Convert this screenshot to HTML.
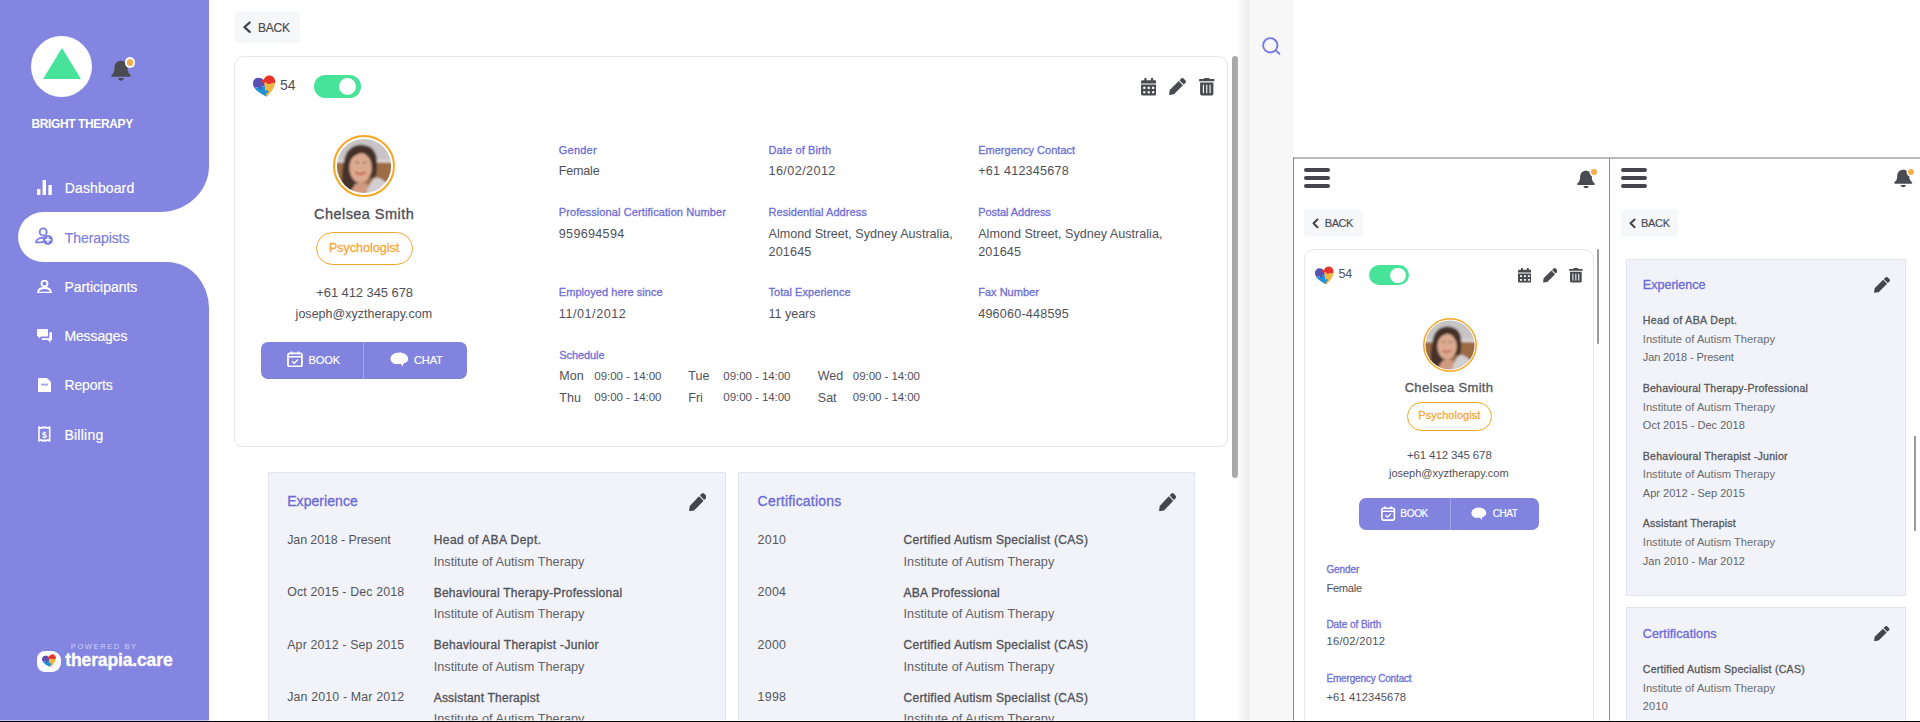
<!DOCTYPE html><html><head><meta charset="utf-8"><title>Therapist profile</title><style>html,body{margin:0;padding:0;background:#fff;}body{width:1920px;height:722px;position:relative;overflow:hidden;font-family:"Liberation Sans",sans-serif;}</style></head><body><div style="position:absolute;left:0px;top:0px;width:209.2px;height:212.3px;background:#8385e0;border-bottom-right-radius:49px 46px"></div>
<div style="position:absolute;left:0px;top:261.8px;width:209.2px;height:460px;background:#8385e0;border-top-right-radius:42px 46px"></div>
<div style="position:absolute;left:0px;top:200px;width:60px;height:80px;background:#8385e0"></div>
<div style="position:absolute;left:18.3px;top:212.3px;width:230px;height:49.4px;background:#fff;border-radius:25px 0 0 25px"></div>
<div style="position:absolute;left:31px;top:36px;width:61px;height:61px;background:#fff;border-radius:50%"></div>
<svg style="position:absolute;left:42.5px;top:48px;" width="38" height="31" viewBox="0 0 38 31" preserveAspectRatio="none"><polygon points="19,0 38,31 0,31" fill="#48e39a"/></svg>
<svg style="position:absolute;left:111px;top:60.3px;" width="20" height="20.700000000000003" viewBox="0 0 448 512" preserveAspectRatio="none"><path fill="#4a4b50" d="M224 512c35.3 0 64-28.7 64-64H160c0 35.3 28.7 64 64 64zM224 20C136 20 78 90 78 196c0 110-38 146-64 170-14 13-14 50 18 50h384c32 0 32-37 18-50-26-24-64-60-64-170C370 90 312 20 224 20z"/></svg>
<div style="position:absolute;left:126.6px;top:59.4px;width:6.8px;height:6.8px;border-radius:50%;background:#f5ad4a;box-shadow:0 0 0 2px #fff"></div>
<svg style="position:absolute;left:37px;top:180px;" width="15" height="15" viewBox="0 0 15 15" preserveAspectRatio="none"><rect x="0" y="9" width="3.4" height="6" fill="#fff"/><rect x="5.6" y="0" width="3.4" height="15" fill="#fff"/><rect x="11.4" y="5" width="3.4" height="10" fill="#fff"/></svg>
<svg style="position:absolute;left:32px;top:224px;" width="26" height="26" viewBox="0 0 26 26" preserveAspectRatio="none"><circle cx="11.2" cy="7.9" r="3.5" fill="none" stroke="#7d80df" stroke-width="1.9"/><path d="M4 18.2 C4.6 15 8.2 13.2 12.6 13.9 L13.2 17.6 C10 18.4 6.6 18.5 4 18.2 Z" fill="none" stroke="#7d80df" stroke-width="1.9" stroke-linejoin="round"/><circle cx="15.9" cy="15.9" r="5" fill="#7d80df"/><line x1="15.9" y1="13.1" x2="15.9" y2="18.7" stroke="#fff" stroke-width="1.5"/><line x1="13.1" y1="15.9" x2="18.7" y2="15.9" stroke="#fff" stroke-width="1.5"/></svg>
<svg style="position:absolute;left:37px;top:279.5px;" width="15" height="13.5" viewBox="0 0 15 13.5" preserveAspectRatio="none"><circle cx="7.5" cy="3.6" r="3" fill="none" stroke="#fff" stroke-width="1.8"/><path d="M1 12.6 C1.3 9 4 8 7.5 8 C11 8 13.7 9 14 12.6 Z" fill="none" stroke="#fff" stroke-width="1.8" stroke-linejoin="round"/></svg>
<svg style="position:absolute;left:36.7px;top:328.6px;" width="15.3" height="14" viewBox="0 0 15.3 14" preserveAspectRatio="none"><path d="M0 0.8 Q0 0 0.8 0 H10.2 Q11 0 11 0.8 V6.8 Q11 7.6 10.2 7.6 H4 L1.8 9.6 V7.6 H0.8 Q0 7.6 0 6.8 Z" fill="#fff"/><path d="M12.4 3.2 H14.5 Q15.3 3.2 15.3 4 V10.2 Q15.3 11 14.5 11 H13.6 V13.8 L11 11 H5.5 Q4.7 11 4.7 10.2 V9.2 H11.6 Q12.4 9.2 12.4 8.4 Z" fill="#fff"/></svg>
<svg style="position:absolute;left:38px;top:377.8px;" width="13.2" height="14.5" viewBox="0 0 13.2 14.5" preserveAspectRatio="none"><path d="M0 1 Q0 0 1 0 H9 L13.2 4.2 V13.5 Q13.2 14.5 12.2 14.5 H1 Q0 14.5 0 13.5 Z" fill="#fff"/><rect x="3" y="5.6" width="7.2" height="2" fill="#a9abee"/></svg>
<svg style="position:absolute;left:38px;top:426px;" width="12.7" height="16" viewBox="0 0 12.7 16" preserveAspectRatio="none"><path d="M1 1 L3 2.2 L5 1 L6.35 2 L7.7 1 L9.7 2.2 L11.7 1 V15 L9.7 13.8 L7.7 15 L6.35 14 L5 15 L3 13.8 L1 15 Z" fill="none" stroke="#fff" stroke-width="1.6" stroke-linejoin="round"/><text x="6.35" y="11.6" font-family="Liberation Sans" font-weight="700" font-size="8.5" fill="#fff" text-anchor="middle">$</text></svg>
<div style="position:absolute;left:37px;top:651px;width:24px;height:21px;border-radius:8px 9px 9px 8px;background:#fff"></div>
<svg style="position:absolute;left:41.5px;top:654px;" width="15" height="14" viewBox="0 0 24 23" preserveAspectRatio="none"><defs><clipPath id="hc15"><path d="M12 22 C4 16 0.8 11.8 0.8 7.2 C0.8 3.9 3.3 1.5 6.4 1.5 C8.7 1.5 10.8 2.8 12 4.9 C13.2 2.8 15.3 1.5 17.6 1.5 C20.7 1.5 23.2 3.9 23.2 7.2 C23.2 11.8 20 16 12 22 Z"/></clipPath></defs><g transform="rotate(-11 12 12)"><g clip-path="url(#hc15)"><rect x="-2" y="-2" width="14" height="13" fill="#5a50b2"/><rect x="12" y="-2" width="14" height="12" fill="#e8352b"/><rect x="-2" y="11" width="14" height="14" fill="#1c90d8"/><rect x="12" y="10" width="14" height="15" fill="#f3b540"/><circle cx="11.2" cy="5.6" r="1.5" fill="#e8352b"/><circle cx="13.4" cy="9.2" r="1.5" fill="#f3b540"/><circle cx="7.5" cy="11.8" r="1.5" fill="#5a50b2"/><circle cx="12.9" cy="17" r="1.5" fill="#1c90d8"/></g></g></svg>
<div style="position:absolute;left:234.7px;top:11.2px;width:65px;height:31.5px;background:#f6f7f9;border-radius:4px"></div>
<svg style="position:absolute;left:243.2px;top:21.2px;" width="8.200000000000017" height="12.400000000000002" viewBox="0 0 8.200000000000017 12.400000000000002" preserveAspectRatio="none"><polyline points="6.700000000000017,1.5 1.5,6.200000000000001 6.700000000000017,10.900000000000002" fill="none" stroke="#44454c" stroke-width="2.3" stroke-linecap="round" stroke-linejoin="round"/></svg>
<div style="position:absolute;left:234.3px;top:56px;width:994px;height:391px;border:1px solid #e3e6eb;border-radius:10px 10px 8px 8px;background:#fff;box-sizing:border-box"></div>
<svg style="position:absolute;left:253px;top:75px;" width="24" height="23" viewBox="0 0 24 23" preserveAspectRatio="none"><defs><clipPath id="hc19"><path d="M12 22 C4 16 0.8 11.8 0.8 7.2 C0.8 3.9 3.3 1.5 6.4 1.5 C8.7 1.5 10.8 2.8 12 4.9 C13.2 2.8 15.3 1.5 17.6 1.5 C20.7 1.5 23.2 3.9 23.2 7.2 C23.2 11.8 20 16 12 22 Z"/></clipPath></defs><g transform="rotate(-11 12 12)"><g clip-path="url(#hc19)"><rect x="-2" y="-2" width="14" height="13" fill="#5a50b2"/><rect x="12" y="-2" width="14" height="12" fill="#e8352b"/><rect x="-2" y="11" width="14" height="14" fill="#1c90d8"/><rect x="12" y="10" width="14" height="15" fill="#f3b540"/><circle cx="11.2" cy="5.6" r="1.5" fill="#e8352b"/><circle cx="13.4" cy="9.2" r="1.5" fill="#f3b540"/><circle cx="7.5" cy="11.8" r="1.5" fill="#5a50b2"/><circle cx="12.9" cy="17" r="1.5" fill="#1c90d8"/></g></g></svg>
<div style="position:absolute;left:314px;top:75px;width:46.6px;height:23.2px;border-radius:11.6px;background:#47e398"></div>
<div style="position:absolute;left:339.0px;top:78.1px;width:17px;height:17px;border-radius:50%;background:#fff"></div>
<svg style="position:absolute;left:1140.5px;top:78px;" width="15.5" height="17.5" viewBox="0 0 448 512" preserveAspectRatio="none"><path fill="#4a4b50" d="M0 464c0 26.5 21.5 48 48 48h352c26.5 0 48-21.5 48-48V192H0v272zm320-196c0-6.6 5.4-12 12-12h40c6.6 0 12 5.4 12 12v40c0 6.6-5.4 12-12 12h-40c-6.6 0-12-5.4-12-12v-40zm0 128c0-6.6 5.4-12 12-12h40c6.6 0 12 5.4 12 12v40c0 6.6-5.4 12-12 12h-40c-6.6 0-12-5.4-12-12v-40zM192 268c0-6.6 5.4-12 12-12h40c6.6 0 12 5.4 12 12v40c0 6.6-5.4 12-12 12h-40c-6.6 0-12-5.4-12-12v-40zm0 128c0-6.6 5.4-12 12-12h40c6.6 0 12 5.4 12 12v40c0 6.6-5.4 12-12 12h-40c-6.6 0-12-5.4-12-12v-40zM64 268c0-6.6 5.4-12 12-12h40c6.6 0 12 5.4 12 12v40c0 6.6-5.4 12-12 12H76c-6.6 0-12-5.4-12-12v-40zm0 128c0-6.6 5.4-12 12-12h40c6.6 0 12 5.4 12 12v40c0 6.6-5.4 12-12 12H76c-6.6 0-12-5.4-12-12v-40zM400 64h-48V16c0-8.8-7.2-16-16-16h-32c-8.8 0-16 7.2-16 16v48H160V16c0-8.8-7.2-16-16-16h-32c-8.8 0-16 7.2-16 16v48H48C21.5 64 0 85.5 0 112v48h448v-48c0-26.5-21.5-48-48-48z"/></svg>
<svg style="position:absolute;left:1169px;top:78px;" width="17" height="17" viewBox="0 0 512 512" preserveAspectRatio="none"><path fill="#4a4b50" d="M497.9 142.1l-46.1 46.1c-4.7 4.7-12.3 4.7-17 0l-111-111c-4.7-4.7-4.7-12.3 0-17l46.1-46.1c18.7-18.7 49.1-18.7 67.9 0l60.1 60.1c18.8 18.7 18.8 49.1 0 67.9zM284.2 99.8L21.6 362.4 0 512 149.6 490.4 412.3 227.8c4.7-4.7 4.7-12.3 0-17l-111-111c-4.8-4.7-12.4-4.7-17.1 0z"/></svg>
<svg style="position:absolute;left:1199px;top:78px;" width="15.5" height="17.5" viewBox="0 0 448 512" preserveAspectRatio="none"><path fill="#4a4b50" d="M32 464a48 48 0 0 0 48 48h288a48 48 0 0 0 48-48V128H32zm272-256a16 16 0 0 1 32 0v224a16 16 0 0 1-32 0zm-96 0a16 16 0 0 1 32 0v224a16 16 0 0 1-32 0zm-96 0a16 16 0 0 1 32 0v224a16 16 0 0 1-32 0zM432 32H312l-9.4-18.7A24 24 0 0 0 281.1 0H166.8a23.72 23.72 0 0 0-21.4 13.3L136 32H16A16 16 0 0 0 0 48v32a16 16 0 0 0 16 16h416a16 16 0 0 0 16-16V48a16 16 0 0 0-16-16z"/></svg>
<svg style="position:absolute;left:333.1px;top:134.8px;" width="62" height="62" viewBox="0 0 100 100" preserveAspectRatio="none"><defs><clipPath id="av25"><circle cx="50" cy="50" r="43.7"/></clipPath><filter id="bl25" x="-10%" y="-10%" width="120%" height="120%"><feGaussianBlur stdDeviation="1.6"/></filter></defs><circle cx="50" cy="50" r="48.4" fill="none" stroke="#f5a623" stroke-width="3.2"/><g clip-path="url(#av25)"><g filter="url(#bl25)"><rect x="-5" y="-5" width="110" height="110" fill="#c9c4c6"/><rect x="-5" y="40" width="110" height="5" fill="#e2dcda"/><rect x="-5" y="44.5" width="110" height="60" fill="#9c6c45"/><path d="M15 92 C13 70 15 45 21 31 C27 18 40 15 49 16 C60 17 67 23 70 34 C72 46 71 58 69 68 L58 70 L30 92 Z" fill="#45322a"/><ellipse cx="44.5" cy="53" rx="18" ry="24" fill="#dcaa90"/><path d="M26 40 C28 24 48 18 62 30 C55 26 42 26 26 40 Z" fill="#3f2c24"/><path d="M36 60 Q44 66 52 60" stroke="#c0504a" stroke-width="3" fill="none"/><path d="M36 44 l6 1 M48 45 l6 -1" stroke="#6a4a3c" stroke-width="1.6"/><path d="M26 110 C28 86 34 78 44 76 C50 76 54 78 58 82 L58 110 Z" fill="#cf9a80"/><path d="M52 110 C54 88 60 72 70 68 C80 70 92 80 100 96 L100 110 Z" fill="#d3cfd0"/></g></g></svg>
<div style="position:absolute;left:316.2px;top:232px;width:97px;height:32.6px;border:1px solid #f5a623;border-radius:17px;box-sizing:border-box"></div>
<div style="position:absolute;left:261px;top:342px;width:205.89999999999998px;height:36.60000000000002px;border-radius:7px;background:#8183df"></div>
<div style="position:absolute;left:363.3px;top:342px;width:1px;height:36.60000000000002px;background:#a4a6ea"></div>
<svg style="position:absolute;left:286.9px;top:351px;" width="15.900000000000034" height="16.399999999999977" viewBox="0 0 16 17" preserveAspectRatio="none"><rect x="1" y="2.5" width="14" height="13.5" rx="1.5" fill="none" stroke="#fff" stroke-width="1.8"/><line x1="1" y1="6" x2="15" y2="6" stroke="#fff" stroke-width="1.6"/><line x1="4.5" y1="0.5" x2="4.5" y2="3.5" stroke="#fff" stroke-width="1.8"/><line x1="11.5" y1="0.5" x2="11.5" y2="3.5" stroke="#fff" stroke-width="1.8"/><polyline points="5,10.5 7.3,12.7 11,8.8" fill="none" stroke="#fff" stroke-width="1.4"/></svg>
<svg style="position:absolute;left:389.6px;top:352.3px;" width="18.69999999999999" height="15.099999999999966" viewBox="0 0 19 15" preserveAspectRatio="none"><path d="M9.5 0.5C4.5 0.5 0.5 3.3 0.5 6.7c0 2.2 1.6 4.1 4.1 5.2h6.5l2 2.8 0.3-3.1c3.2-1 5.1-2.8 5.1-4.9C18.5 3.3 14.5 0.5 9.5 0.5z" fill="#fff"/></svg>
<div style="position:absolute;left:1231.8px;top:56px;width:6px;height:422px;background:#a9a9a9;border-radius:3px"></div>
<div style="position:absolute;left:268px;top:472.3px;width:458px;height:287.7px;background:#f2f3f8;border:1px solid #e3e5ea;box-sizing:border-box"></div>
<svg style="position:absolute;left:688.7px;top:492.7px;" width="17.59999999999991" height="18.30000000000001" viewBox="0 0 512 512" preserveAspectRatio="none"><path fill="#45464b" d="M497.9 142.1l-46.1 46.1c-4.7 4.7-12.3 4.7-17 0l-111-111c-4.7-4.7-4.7-12.3 0-17l46.1-46.1c18.7-18.7 49.1-18.7 67.9 0l60.1 60.1c18.8 18.7 18.8 49.1 0 67.9zM284.2 99.8L21.6 362.4 0 512 149.6 490.4 412.3 227.8c4.7-4.7 4.7-12.3 0-17l-111-111c-4.8-4.7-12.4-4.7-17.1 0z"/></svg>
<div style="position:absolute;left:738.4px;top:472.3px;width:456.19999999999993px;height:287.7px;background:#f2f3f8;border:1px solid #e3e5ea;box-sizing:border-box"></div>
<svg style="position:absolute;left:1159.3px;top:492.7px;" width="17.200000000000045" height="18.30000000000001" viewBox="0 0 512 512" preserveAspectRatio="none"><path fill="#45464b" d="M497.9 142.1l-46.1 46.1c-4.7 4.7-12.3 4.7-17 0l-111-111c-4.7-4.7-4.7-12.3 0-17l46.1-46.1c18.7-18.7 49.1-18.7 67.9 0l60.1 60.1c18.8 18.7 18.8 49.1 0 67.9zM284.2 99.8L21.6 362.4 0 512 149.6 490.4 412.3 227.8c4.7-4.7 4.7-12.3 0-17l-111-111c-4.8-4.7-12.4-4.7-17.1 0z"/></svg>
<div style="position:absolute;left:1236px;top:0px;width:13.3px;height:722px;background:linear-gradient(to right,rgba(230,230,230,0),#ececec)"></div>
<div style="position:absolute;left:1249.3px;top:0px;width:44px;height:722px;background:#f7f7f7"></div>
<svg style="position:absolute;left:1261px;top:36px;" width="20" height="20" viewBox="0 0 20 20" preserveAspectRatio="none"><circle cx="9.3" cy="9.3" r="7.2" fill="none" stroke="#7679df" stroke-width="1.9"/><line x1="14.6" y1="14.4" x2="18.4" y2="17.8" stroke="#7679df" stroke-width="1.9" stroke-linecap="round"/></svg>
<div style="position:absolute;left:1293px;top:156.9px;width:317px;height:566px;background:#fff;border-left:1.3px solid #8c8c8c;border-top:2px solid #bababa;border-right:1.6px solid #929292;box-sizing:border-box"></div>
<div style="position:absolute;left:1304px;top:167.5px;width:26px;height:4px;background:#45464b;border-radius:2px"></div>
<div style="position:absolute;left:1304px;top:175.6px;width:26px;height:4px;background:#45464b;border-radius:2px"></div>
<div style="position:absolute;left:1304px;top:183.6px;width:26px;height:4px;background:#45464b;border-radius:2px"></div>
<svg style="position:absolute;left:1577px;top:169.6px;" width="18" height="18.400000000000006" viewBox="0 0 448 512" preserveAspectRatio="none"><path fill="#4a4b50" d="M224 512c35.3 0 64-28.7 64-64H160c0 35.3 28.7 64 64 64zM224 20C136 20 78 90 78 196c0 110-38 146-64 170-14 13-14 50 18 50h384c32 0 32-37 18-50-26-24-64-60-64-170C370 90 312 20 224 20z"/></svg>
<div style="position:absolute;left:1590.8px;top:169px;width:6px;height:6px;border-radius:50%;background:#f5ad4a;box-shadow:0 0 0 1.5px #fff"></div>
<div style="position:absolute;left:1304px;top:208.8px;width:58.6px;height:28.6px;background:#f6f7f9;border-radius:4px"></div>
<svg style="position:absolute;left:1312px;top:218px;" width="7" height="10.699999999999989" viewBox="0 0 7 10.699999999999989" preserveAspectRatio="none"><polyline points="5.5,1.5 1.5,5.349999999999994 5.5,9.199999999999989" fill="none" stroke="#44454c" stroke-width="2" stroke-linecap="round" stroke-linejoin="round"/></svg>
<div style="position:absolute;left:1304.4px;top:248.8px;width:290px;height:500px;border:1px solid #e4e7ec;border-radius:10px;background:#fff;box-sizing:border-box"></div>
<div style="position:absolute;left:1597px;top:248.5px;width:2px;height:95.5px;background:#9a9a9a;border-radius:1px"></div>
<svg style="position:absolute;left:1315.3px;top:265.5px;" width="20" height="19.5" viewBox="0 0 24 23" preserveAspectRatio="none"><defs><clipPath id="hc49"><path d="M12 22 C4 16 0.8 11.8 0.8 7.2 C0.8 3.9 3.3 1.5 6.4 1.5 C8.7 1.5 10.8 2.8 12 4.9 C13.2 2.8 15.3 1.5 17.6 1.5 C20.7 1.5 23.2 3.9 23.2 7.2 C23.2 11.8 20 16 12 22 Z"/></clipPath></defs><g transform="rotate(-11 12 12)"><g clip-path="url(#hc49)"><rect x="-2" y="-2" width="14" height="13" fill="#5a50b2"/><rect x="12" y="-2" width="14" height="12" fill="#e8352b"/><rect x="-2" y="11" width="14" height="14" fill="#1c90d8"/><rect x="12" y="10" width="14" height="15" fill="#f3b540"/><circle cx="11.2" cy="5.6" r="1.5" fill="#e8352b"/><circle cx="13.4" cy="9.2" r="1.5" fill="#f3b540"/><circle cx="7.5" cy="11.8" r="1.5" fill="#5a50b2"/><circle cx="12.9" cy="17" r="1.5" fill="#1c90d8"/></g></g></svg>
<div style="position:absolute;left:1369.3px;top:265.4px;width:40px;height:20px;border-radius:10.0px;background:#47e398"></div>
<div style="position:absolute;left:1390.05px;top:267.65px;width:15.5px;height:15.5px;border-radius:50%;background:#fff"></div>
<svg style="position:absolute;left:1517.6px;top:268px;" width="13.800000000000182" height="14.600000000000023" viewBox="0 0 448 512" preserveAspectRatio="none"><path fill="#4a4b50" d="M0 464c0 26.5 21.5 48 48 48h352c26.5 0 48-21.5 48-48V192H0v272zm320-196c0-6.6 5.4-12 12-12h40c6.6 0 12 5.4 12 12v40c0 6.6-5.4 12-12 12h-40c-6.6 0-12-5.4-12-12v-40zm0 128c0-6.6 5.4-12 12-12h40c6.6 0 12 5.4 12 12v40c0 6.6-5.4 12-12 12h-40c-6.6 0-12-5.4-12-12v-40zM192 268c0-6.6 5.4-12 12-12h40c6.6 0 12 5.4 12 12v40c0 6.6-5.4 12-12 12h-40c-6.6 0-12-5.4-12-12v-40zm0 128c0-6.6 5.4-12 12-12h40c6.6 0 12 5.4 12 12v40c0 6.6-5.4 12-12 12h-40c-6.6 0-12-5.4-12-12v-40zM64 268c0-6.6 5.4-12 12-12h40c6.6 0 12 5.4 12 12v40c0 6.6-5.4 12-12 12H76c-6.6 0-12-5.4-12-12v-40zm0 128c0-6.6 5.4-12 12-12h40c6.6 0 12 5.4 12 12v40c0 6.6-5.4 12-12 12H76c-6.6 0-12-5.4-12-12v-40zM400 64h-48V16c0-8.8-7.2-16-16-16h-32c-8.8 0-16 7.2-16 16v48H160V16c0-8.8-7.2-16-16-16h-32c-8.8 0-16 7.2-16 16v48H48C21.5 64 0 85.5 0 112v48h448v-48c0-26.5-21.5-48-48-48z"/></svg>
<svg style="position:absolute;left:1542.6px;top:268px;" width="14.700000000000045" height="14.600000000000023" viewBox="0 0 512 512" preserveAspectRatio="none"><path fill="#4a4b50" d="M497.9 142.1l-46.1 46.1c-4.7 4.7-12.3 4.7-17 0l-111-111c-4.7-4.7-4.7-12.3 0-17l46.1-46.1c18.7-18.7 49.1-18.7 67.9 0l60.1 60.1c18.8 18.7 18.8 49.1 0 67.9zM284.2 99.8L21.6 362.4 0 512 149.6 490.4 412.3 227.8c4.7-4.7 4.7-12.3 0-17l-111-111c-4.8-4.7-12.4-4.7-17.1 0z"/></svg>
<svg style="position:absolute;left:1569.3px;top:268px;" width="13.700000000000045" height="14.600000000000023" viewBox="0 0 448 512" preserveAspectRatio="none"><path fill="#4a4b50" d="M32 464a48 48 0 0 0 48 48h288a48 48 0 0 0 48-48V128H32zm272-256a16 16 0 0 1 32 0v224a16 16 0 0 1-32 0zm-96 0a16 16 0 0 1 32 0v224a16 16 0 0 1-32 0zm-96 0a16 16 0 0 1 32 0v224a16 16 0 0 1-32 0zM432 32H312l-9.4-18.7A24 24 0 0 0 281.1 0H166.8a23.72 23.72 0 0 0-21.4 13.3L136 32H16A16 16 0 0 0 0 48v32a16 16 0 0 0 16 16h416a16 16 0 0 0 16-16V48a16 16 0 0 0-16-16z"/></svg>
<svg style="position:absolute;left:1422.5px;top:318.0px;" width="54" height="54" viewBox="0 0 100 100" preserveAspectRatio="none"><defs><clipPath id="av55"><circle cx="50" cy="50" r="45.5"/></clipPath><filter id="bl55" x="-10%" y="-10%" width="120%" height="120%"><feGaussianBlur stdDeviation="1.6"/></filter></defs><circle cx="50" cy="50" r="48.6" fill="none" stroke="#f5a623" stroke-width="2.8"/><g clip-path="url(#av55)"><g filter="url(#bl55)"><rect x="-5" y="-5" width="110" height="110" fill="#c9c4c6"/><rect x="-5" y="40" width="110" height="5" fill="#e2dcda"/><rect x="-5" y="44.5" width="110" height="60" fill="#9c6c45"/><path d="M15 92 C13 70 15 45 21 31 C27 18 40 15 49 16 C60 17 67 23 70 34 C72 46 71 58 69 68 L58 70 L30 92 Z" fill="#45322a"/><ellipse cx="44.5" cy="53" rx="18" ry="24" fill="#dcaa90"/><path d="M26 40 C28 24 48 18 62 30 C55 26 42 26 26 40 Z" fill="#3f2c24"/><path d="M36 60 Q44 66 52 60" stroke="#c0504a" stroke-width="3" fill="none"/><path d="M36 44 l6 1 M48 45 l6 -1" stroke="#6a4a3c" stroke-width="1.6"/><path d="M26 110 C28 86 34 78 44 76 C50 76 54 78 58 82 L58 110 Z" fill="#cf9a80"/><path d="M52 110 C54 88 60 72 70 68 C80 70 92 80 100 96 L100 110 Z" fill="#d3cfd0"/></g></g></svg>
<div style="position:absolute;left:1407px;top:402.4px;width:84.7px;height:28.2px;border:1px solid #f5a623;border-radius:15px;box-sizing:border-box"></div>
<div style="position:absolute;left:1358.8px;top:498.4px;width:180.4000000000001px;height:31.600000000000023px;border-radius:7px;background:#8183df"></div>
<div style="position:absolute;left:1449.5px;top:498.4px;width:1px;height:31.600000000000023px;background:#a4a6ea"></div>
<svg style="position:absolute;left:1381.4px;top:506px;" width="14.299999999999955" height="15" viewBox="0 0 16 17" preserveAspectRatio="none"><rect x="1" y="2.5" width="14" height="13.5" rx="1.5" fill="none" stroke="#fff" stroke-width="1.8"/><line x1="1" y1="6" x2="15" y2="6" stroke="#fff" stroke-width="1.6"/><line x1="4.5" y1="0.5" x2="4.5" y2="3.5" stroke="#fff" stroke-width="1.8"/><line x1="11.5" y1="0.5" x2="11.5" y2="3.5" stroke="#fff" stroke-width="1.8"/><polyline points="5,10.5 7.3,12.7 11,8.8" fill="none" stroke="#fff" stroke-width="1.4"/></svg>
<svg style="position:absolute;left:1471px;top:507px;" width="15.700000000000045" height="13.5" viewBox="0 0 19 15" preserveAspectRatio="none"><path d="M9.5 0.5C4.5 0.5 0.5 3.3 0.5 6.7c0 2.2 1.6 4.1 4.1 5.2h6.5l2 2.8 0.3-3.1c3.2-1 5.1-2.8 5.1-4.9C18.5 3.3 14.5 0.5 9.5 0.5z" fill="#fff"/></svg>
<div style="position:absolute;left:1609.3px;top:156.9px;width:320px;height:566px;background:#fff;border-left:1.6px solid #929292;border-top:2px solid #bababa;box-sizing:border-box"></div>
<div style="position:absolute;left:1620.7px;top:167.5px;width:26px;height:4px;background:#45464b;border-radius:2px"></div>
<div style="position:absolute;left:1620.7px;top:175.6px;width:26px;height:4px;background:#45464b;border-radius:2px"></div>
<div style="position:absolute;left:1620.7px;top:183.6px;width:26px;height:4px;background:#45464b;border-radius:2px"></div>
<svg style="position:absolute;left:1894px;top:169.4px;" width="18.5" height="18.19999999999999" viewBox="0 0 448 512" preserveAspectRatio="none"><path fill="#4a4b50" d="M224 512c35.3 0 64-28.7 64-64H160c0 35.3 28.7 64 64 64zM224 20C136 20 78 90 78 196c0 110-38 146-64 170-14 13-14 50 18 50h384c32 0 32-37 18-50-26-24-64-60-64-170C370 90 312 20 224 20z"/></svg>
<div style="position:absolute;left:1907.6px;top:169px;width:6px;height:6px;border-radius:50%;background:#f5ad4a;box-shadow:0 0 0 1.5px #fff"></div>
<div style="position:absolute;left:1620.7px;top:209.2px;width:57.7px;height:28.2px;background:#f6f7f9;border-radius:4px"></div>
<svg style="position:absolute;left:1628.7px;top:218px;" width="7.099999999999909" height="10.699999999999989" viewBox="0 0 7.099999999999909 10.699999999999989" preserveAspectRatio="none"><polyline points="5.599999999999909,1.5 1.5,5.349999999999994 5.599999999999909,9.199999999999989" fill="none" stroke="#44454c" stroke-width="2" stroke-linecap="round" stroke-linejoin="round"/></svg>
<div style="position:absolute;left:1626.3px;top:259.4px;width:279.3px;height:337px;background:#f2f3f8;border:1px solid #e3e5ea;box-sizing:border-box"></div>
<svg style="position:absolute;left:1874px;top:277.4px;" width="16" height="15.800000000000011" viewBox="0 0 512 512" preserveAspectRatio="none"><path fill="#45464b" d="M497.9 142.1l-46.1 46.1c-4.7 4.7-12.3 4.7-17 0l-111-111c-4.7-4.7-4.7-12.3 0-17l46.1-46.1c18.7-18.7 49.1-18.7 67.9 0l60.1 60.1c18.8 18.7 18.8 49.1 0 67.9zM284.2 99.8L21.6 362.4 0 512 149.6 490.4 412.3 227.8c4.7-4.7 4.7-12.3 0-17l-111-111c-4.8-4.7-12.4-4.7-17.1 0z"/></svg>
<div style="position:absolute;left:1626px;top:607.3px;width:279.6px;height:200px;background:#f2f3f8;border:1px solid #e3e5ea;box-sizing:border-box"></div>
<svg style="position:absolute;left:1874px;top:625.8px;" width="15.5" height="15.200000000000045" viewBox="0 0 512 512" preserveAspectRatio="none"><path fill="#45464b" d="M497.9 142.1l-46.1 46.1c-4.7 4.7-12.3 4.7-17 0l-111-111c-4.7-4.7-4.7-12.3 0-17l46.1-46.1c18.7-18.7 49.1-18.7 67.9 0l60.1 60.1c18.8 18.7 18.8 49.1 0 67.9zM284.2 99.8L21.6 362.4 0 512 149.6 490.4 412.3 227.8c4.7-4.7 4.7-12.3 0-17l-111-111c-4.8-4.7-12.4-4.7-17.1 0z"/></svg>
<div style="position:absolute;left:1914px;top:436.4px;width:1.5px;height:94.6px;background:#9a9a9a"></div>
<div style="position:absolute;left:31.40px;top:117.84px;font-size:12px;font-weight:700;color:#fff;line-height:12px;white-space:nowrap;letter-spacing:-0.377px;">BRIGHT THERAPY</div>
<div style="position:absolute;left:64.80px;top:181.35px;font-size:14px;font-weight:400;color:#fff;line-height:14px;white-space:nowrap;-webkit-text-stroke:0.18px #fff;letter-spacing:0.111px;">Dashboard</div>
<div style="position:absolute;left:64.80px;top:230.75px;font-size:14px;font-weight:400;color:#7b7edd;line-height:14px;white-space:nowrap;-webkit-text-stroke:0.18px #7b7edd;letter-spacing:-0.086px;">Therapists</div>
<div style="position:absolute;left:64.40px;top:280.15px;font-size:14px;font-weight:400;color:#fff;line-height:14px;white-space:nowrap;-webkit-text-stroke:0.18px #fff;letter-spacing:-0.021px;">Participants</div>
<div style="position:absolute;left:64.40px;top:329.25px;font-size:14px;font-weight:400;color:#fff;line-height:14px;white-space:nowrap;-webkit-text-stroke:0.18px #fff;letter-spacing:-0.114px;">Messages</div>
<div style="position:absolute;left:64.40px;top:378.45px;font-size:14px;font-weight:400;color:#fff;line-height:14px;white-space:nowrap;-webkit-text-stroke:0.18px #fff;letter-spacing:-0.090px;">Reports</div>
<div style="position:absolute;left:64.40px;top:427.85px;font-size:14px;font-weight:400;color:#fff;line-height:14px;white-space:nowrap;-webkit-text-stroke:0.18px #fff;letter-spacing:0.263px;">Billing</div>
<div style="position:absolute;left:70.80px;top:642.77px;font-size:7.6px;font-weight:400;color:#cfd0f4;line-height:7.6px;white-space:nowrap;letter-spacing:1.542px;">POWERED BY</div>
<div style="position:absolute;left:65.30px;top:652.38px;font-size:17.5px;font-weight:700;color:#fff;line-height:17.5px;white-space:nowrap;letter-spacing:-0.135px;-webkit-text-stroke:0.35px #fff;">therapia.care</div>
<div style="position:absolute;left:257.90px;top:21.84px;font-size:12px;font-weight:400;color:#4a4b52;line-height:12px;white-space:nowrap;-webkit-text-stroke:0.18px #4a4b52;letter-spacing:-0.147px;">BACK</div>
<div style="position:absolute;left:280.00px;top:78.05px;font-size:14px;font-weight:400;color:#505058;line-height:14px;white-space:nowrap;letter-spacing:0.061px;">54</div>
<div style="position:absolute;left:314.00px;top:207.22px;font-size:14.5px;font-weight:400;color:#4d4e56;line-height:14.5px;white-space:nowrap;-webkit-text-stroke:0.32px #4d4e56;letter-spacing:0.454px;">Chelsea Smith</div>
<div style="position:absolute;left:328.95px;top:242.12px;font-size:12.5px;font-weight:400;color:#f4a93c;line-height:12.5px;white-space:nowrap;-webkit-text-stroke:0.32px #f4a93c;letter-spacing:0.009px;">Psychologist</div>
<div style="position:absolute;left:316.25px;top:285.79px;font-size:13px;font-weight:400;color:#505058;line-height:13px;white-space:nowrap;letter-spacing:-0.085px;">+61 412 345 678</div>
<div style="position:absolute;left:295.60px;top:308.22px;font-size:12.5px;font-weight:400;color:#505058;line-height:12.5px;white-space:nowrap;letter-spacing:0.022px;">joseph@xyztherapy.com</div>
<div style="position:absolute;left:308.40px;top:354.89px;font-size:11px;font-weight:400;color:#fff;line-height:11px;white-space:nowrap;-webkit-text-stroke:0.18px #fff;letter-spacing:0.001px;">BOOK</div>
<div style="position:absolute;left:414.00px;top:354.89px;font-size:11px;font-weight:400;color:#fff;line-height:11px;white-space:nowrap;-webkit-text-stroke:0.18px #fff;letter-spacing:-0.110px;">CHAT</div>
<div style="position:absolute;left:558.80px;top:144.59px;font-size:11px;font-weight:400;color:#6e6ed8;line-height:11px;white-space:nowrap;-webkit-text-stroke:0.3px #6e6ed8;letter-spacing:0.216px;">Gender</div>
<div style="position:absolute;left:558.80px;top:165.23px;font-size:12.6px;font-weight:400;color:#505058;line-height:12.6px;white-space:nowrap;letter-spacing:-0.217px;">Female</div>
<div style="position:absolute;left:768.50px;top:144.59px;font-size:11px;font-weight:400;color:#6e6ed8;line-height:11px;white-space:nowrap;-webkit-text-stroke:0.3px #6e6ed8;letter-spacing:0.128px;">Date of Birth</div>
<div style="position:absolute;left:768.50px;top:165.23px;font-size:12.6px;font-weight:400;color:#505058;line-height:12.6px;white-space:nowrap;letter-spacing:0.427px;">16/02/2012</div>
<div style="position:absolute;left:978.20px;top:144.59px;font-size:11px;font-weight:400;color:#6e6ed8;line-height:11px;white-space:nowrap;-webkit-text-stroke:0.3px #6e6ed8;letter-spacing:0.023px;">Emergency Contact</div>
<div style="position:absolute;left:978.20px;top:165.23px;font-size:12.6px;font-weight:400;color:#505058;line-height:12.6px;white-space:nowrap;letter-spacing:0.223px;">+61 412345678</div>
<div style="position:absolute;left:558.80px;top:206.89px;font-size:11px;font-weight:400;color:#6e6ed8;line-height:11px;white-space:nowrap;-webkit-text-stroke:0.3px #6e6ed8;letter-spacing:0.101px;">Professional Certification Number</div>
<div style="position:absolute;left:558.80px;top:227.73px;font-size:12.6px;font-weight:400;color:#505058;line-height:12.6px;white-space:nowrap;letter-spacing:0.295px;">959694594</div>
<div style="position:absolute;left:768.50px;top:206.89px;font-size:11px;font-weight:400;color:#6e6ed8;line-height:11px;white-space:nowrap;-webkit-text-stroke:0.3px #6e6ed8;letter-spacing:0.056px;">Residential Address</div>
<div style="position:absolute;left:768.50px;top:227.73px;font-size:12.6px;font-weight:400;color:#505058;line-height:12.6px;white-space:nowrap;letter-spacing:0.003px;">Almond Street, Sydney Australia,</div>
<div style="position:absolute;left:768.50px;top:245.73px;font-size:12.6px;font-weight:400;color:#505058;line-height:12.6px;white-space:nowrap;letter-spacing:0.161px;">201645</div>
<div style="position:absolute;left:978.20px;top:206.89px;font-size:11px;font-weight:400;color:#6e6ed8;line-height:11px;white-space:nowrap;-webkit-text-stroke:0.3px #6e6ed8;letter-spacing:-0.055px;">Postal Address</div>
<div style="position:absolute;left:978.20px;top:227.73px;font-size:12.6px;font-weight:400;color:#505058;line-height:12.6px;white-space:nowrap;letter-spacing:0.003px;">Almond Street, Sydney Australia,</div>
<div style="position:absolute;left:978.20px;top:245.73px;font-size:12.6px;font-weight:400;color:#505058;line-height:12.6px;white-space:nowrap;letter-spacing:0.161px;">201645</div>
<div style="position:absolute;left:558.80px;top:287.29px;font-size:11px;font-weight:400;color:#6e6ed8;line-height:11px;white-space:nowrap;-webkit-text-stroke:0.3px #6e6ed8;letter-spacing:0.061px;">Employed here since</div>
<div style="position:absolute;left:558.80px;top:308.13px;font-size:12.6px;font-weight:400;color:#505058;line-height:12.6px;white-space:nowrap;letter-spacing:0.549px;">11/01/2012</div>
<div style="position:absolute;left:768.50px;top:287.29px;font-size:11px;font-weight:400;color:#6e6ed8;line-height:11px;white-space:nowrap;-webkit-text-stroke:0.3px #6e6ed8;letter-spacing:0.054px;">Total Experience</div>
<div style="position:absolute;left:768.50px;top:308.13px;font-size:12.6px;font-weight:400;color:#505058;line-height:12.6px;white-space:nowrap;letter-spacing:-0.047px;">11 years</div>
<div style="position:absolute;left:978.20px;top:287.29px;font-size:11px;font-weight:400;color:#6e6ed8;line-height:11px;white-space:nowrap;-webkit-text-stroke:0.3px #6e6ed8;letter-spacing:0.017px;">Fax Number</div>
<div style="position:absolute;left:978.20px;top:308.13px;font-size:12.6px;font-weight:400;color:#505058;line-height:12.6px;white-space:nowrap;letter-spacing:0.196px;">496060-448595</div>
<div style="position:absolute;left:559.30px;top:349.59px;font-size:11px;font-weight:400;color:#6e6ed8;line-height:11px;white-space:nowrap;-webkit-text-stroke:0.3px #6e6ed8;letter-spacing:-0.084px;">Schedule</div>
<div style="position:absolute;left:559.30px;top:369.72px;font-size:12.5px;font-weight:400;color:#505058;line-height:12.5px;white-space:nowrap;">Mon</div>
<div style="position:absolute;left:594.30px;top:370.56px;font-size:11.5px;font-weight:400;color:#505058;line-height:11.5px;white-space:nowrap;letter-spacing:-0.052px;">09:00 - 14:00</div>
<div style="position:absolute;left:559.30px;top:391.62px;font-size:12.5px;font-weight:400;color:#505058;line-height:12.5px;white-space:nowrap;">Thu</div>
<div style="position:absolute;left:594.30px;top:392.46px;font-size:11.5px;font-weight:400;color:#505058;line-height:11.5px;white-space:nowrap;letter-spacing:-0.052px;">09:00 - 14:00</div>
<div style="position:absolute;left:688.30px;top:369.72px;font-size:12.5px;font-weight:400;color:#505058;line-height:12.5px;white-space:nowrap;">Tue</div>
<div style="position:absolute;left:723.30px;top:370.56px;font-size:11.5px;font-weight:400;color:#505058;line-height:11.5px;white-space:nowrap;letter-spacing:-0.052px;">09:00 - 14:00</div>
<div style="position:absolute;left:688.30px;top:391.62px;font-size:12.5px;font-weight:400;color:#505058;line-height:12.5px;white-space:nowrap;">Fri</div>
<div style="position:absolute;left:723.30px;top:392.46px;font-size:11.5px;font-weight:400;color:#505058;line-height:11.5px;white-space:nowrap;letter-spacing:-0.052px;">09:00 - 14:00</div>
<div style="position:absolute;left:817.80px;top:369.72px;font-size:12.5px;font-weight:400;color:#505058;line-height:12.5px;white-space:nowrap;">Wed</div>
<div style="position:absolute;left:852.80px;top:370.56px;font-size:11.5px;font-weight:400;color:#505058;line-height:11.5px;white-space:nowrap;letter-spacing:-0.052px;">09:00 - 14:00</div>
<div style="position:absolute;left:817.80px;top:391.62px;font-size:12.5px;font-weight:400;color:#505058;line-height:12.5px;white-space:nowrap;">Sat</div>
<div style="position:absolute;left:852.80px;top:392.46px;font-size:11.5px;font-weight:400;color:#505058;line-height:11.5px;white-space:nowrap;letter-spacing:-0.052px;">09:00 - 14:00</div>
<div style="position:absolute;left:287.20px;top:494.25px;font-size:14px;font-weight:400;color:#6a6ad6;line-height:14px;white-space:nowrap;-webkit-text-stroke:0.32px #6a6ad6;letter-spacing:0.065px;">Experience</div>
<div style="position:absolute;left:287.20px;top:533.70px;font-size:12.4px;font-weight:400;color:#54555c;line-height:12.4px;white-space:nowrap;letter-spacing:-0.067px;">Jan 2018 - Present</div>
<div style="position:absolute;left:433.70px;top:534.04px;font-size:12px;font-weight:400;color:#505158;line-height:12px;white-space:nowrap;-webkit-text-stroke:0.32px #505158;letter-spacing:0.454px;">Head of ABA Dept.</div>
<div style="position:absolute;left:433.70px;top:555.75px;font-size:12.7px;font-weight:400;color:#606168;line-height:12.7px;white-space:nowrap;letter-spacing:0.030px;">Institute of Autism Therapy</div>
<div style="position:absolute;left:287.20px;top:586.20px;font-size:12.4px;font-weight:400;color:#54555c;line-height:12.4px;white-space:nowrap;letter-spacing:0.150px;">Oct 2015 - Dec 2018</div>
<div style="position:absolute;left:433.70px;top:586.54px;font-size:12px;font-weight:400;color:#505158;line-height:12px;white-space:nowrap;-webkit-text-stroke:0.32px #505158;letter-spacing:0.252px;">Behavioural Therapy-Professional</div>
<div style="position:absolute;left:433.70px;top:608.25px;font-size:12.7px;font-weight:400;color:#606168;line-height:12.7px;white-space:nowrap;letter-spacing:0.030px;">Institute of Autism Therapy</div>
<div style="position:absolute;left:287.20px;top:638.70px;font-size:12.4px;font-weight:400;color:#54555c;line-height:12.4px;white-space:nowrap;letter-spacing:0.150px;">Apr 2012 - Sep 2015</div>
<div style="position:absolute;left:433.70px;top:639.04px;font-size:12px;font-weight:400;color:#505158;line-height:12px;white-space:nowrap;-webkit-text-stroke:0.32px #505158;letter-spacing:0.299px;">Behavioural Therapist -Junior</div>
<div style="position:absolute;left:433.70px;top:660.75px;font-size:12.7px;font-weight:400;color:#606168;line-height:12.7px;white-space:nowrap;letter-spacing:0.030px;">Institute of Autism Therapy</div>
<div style="position:absolute;left:287.20px;top:691.20px;font-size:12.4px;font-weight:400;color:#54555c;line-height:12.4px;white-space:nowrap;letter-spacing:0.150px;">Jan 2010 - Mar 2012</div>
<div style="position:absolute;left:433.70px;top:691.54px;font-size:12px;font-weight:400;color:#505158;line-height:12px;white-space:nowrap;-webkit-text-stroke:0.32px #505158;letter-spacing:0.209px;">Assistant Therapist</div>
<div style="position:absolute;left:433.70px;top:713.25px;font-size:12.7px;font-weight:400;color:#606168;line-height:12.7px;white-space:nowrap;letter-spacing:0.030px;">Institute of Autism Therapy</div>
<div style="position:absolute;left:757.60px;top:494.25px;font-size:14px;font-weight:400;color:#6a6ad6;line-height:14px;white-space:nowrap;-webkit-text-stroke:0.32px #6a6ad6;letter-spacing:0.213px;">Certifications</div>
<div style="position:absolute;left:757.60px;top:533.70px;font-size:12.4px;font-weight:400;color:#54555c;line-height:12.4px;white-space:nowrap;letter-spacing:0.255px;">2010</div>
<div style="position:absolute;left:903.50px;top:534.04px;font-size:12px;font-weight:400;color:#505158;line-height:12px;white-space:nowrap;-webkit-text-stroke:0.32px #505158;letter-spacing:0.302px;">Certified Autism Specialist (CAS)</div>
<div style="position:absolute;left:903.50px;top:555.75px;font-size:12.7px;font-weight:400;color:#606168;line-height:12.7px;white-space:nowrap;letter-spacing:0.030px;">Institute of Autism Therapy</div>
<div style="position:absolute;left:757.60px;top:586.20px;font-size:12.4px;font-weight:400;color:#54555c;line-height:12.4px;white-space:nowrap;letter-spacing:0.255px;">2004</div>
<div style="position:absolute;left:903.50px;top:586.54px;font-size:12px;font-weight:400;color:#505158;line-height:12px;white-space:nowrap;-webkit-text-stroke:0.32px #505158;letter-spacing:0.236px;">ABA Professional</div>
<div style="position:absolute;left:903.50px;top:608.25px;font-size:12.7px;font-weight:400;color:#606168;line-height:12.7px;white-space:nowrap;letter-spacing:0.030px;">Institute of Autism Therapy</div>
<div style="position:absolute;left:757.60px;top:638.70px;font-size:12.4px;font-weight:400;color:#54555c;line-height:12.4px;white-space:nowrap;letter-spacing:0.255px;">2000</div>
<div style="position:absolute;left:903.50px;top:639.04px;font-size:12px;font-weight:400;color:#505158;line-height:12px;white-space:nowrap;-webkit-text-stroke:0.32px #505158;letter-spacing:0.302px;">Certified Autism Specialist (CAS)</div>
<div style="position:absolute;left:903.50px;top:660.75px;font-size:12.7px;font-weight:400;color:#606168;line-height:12.7px;white-space:nowrap;letter-spacing:0.030px;">Institute of Autism Therapy</div>
<div style="position:absolute;left:757.60px;top:691.20px;font-size:12.4px;font-weight:400;color:#54555c;line-height:12.4px;white-space:nowrap;letter-spacing:0.255px;">1998</div>
<div style="position:absolute;left:903.50px;top:691.54px;font-size:12px;font-weight:400;color:#505158;line-height:12px;white-space:nowrap;-webkit-text-stroke:0.32px #505158;letter-spacing:0.302px;">Certified Autism Specialist (CAS)</div>
<div style="position:absolute;left:903.50px;top:713.25px;font-size:12.7px;font-weight:400;color:#606168;line-height:12.7px;white-space:nowrap;letter-spacing:0.030px;">Institute of Autism Therapy</div>
<div style="position:absolute;left:1324.80px;top:217.79px;font-size:11px;font-weight:400;color:#4a4b52;line-height:11px;white-space:nowrap;-webkit-text-stroke:0.18px #4a4b52;letter-spacing:-0.442px;">BACK</div>
<div style="position:absolute;left:1338.60px;top:268.32px;font-size:12.5px;font-weight:400;color:#505058;line-height:12.5px;white-space:nowrap;letter-spacing:-0.253px;">54</div>
<div style="position:absolute;left:1404.65px;top:381.39px;font-size:13px;font-weight:400;color:#56575e;line-height:13px;white-space:nowrap;-webkit-text-stroke:0.32px #56575e;letter-spacing:0.319px;">Chelsea Smith</div>
<div style="position:absolute;left:1418.30px;top:410.49px;font-size:11px;font-weight:400;color:#f5a834;line-height:11px;white-space:nowrap;-webkit-text-stroke:0.3px #f5a834;letter-spacing:0.020px;">Psychologist</div>
<div style="position:absolute;left:1406.95px;top:449.76px;font-size:11.5px;font-weight:400;color:#505058;line-height:11.5px;white-space:nowrap;letter-spacing:-0.130px;">+61 412 345 678</div>
<div style="position:absolute;left:1388.95px;top:467.69px;font-size:11px;font-weight:400;color:#505058;line-height:11px;white-space:nowrap;letter-spacing:-0.005px;">joseph@xyztherapy.com</div>
<div style="position:absolute;left:1400.30px;top:509.33px;font-size:10px;font-weight:400;color:#fff;line-height:10px;white-space:nowrap;-webkit-text-stroke:0.18px #fff;letter-spacing:-0.302px;">BOOK</div>
<div style="position:absolute;left:1492.70px;top:509.33px;font-size:10px;font-weight:400;color:#fff;line-height:10px;white-space:nowrap;-webkit-text-stroke:0.18px #fff;letter-spacing:-0.396px;">CHAT</div>
<div style="position:absolute;left:1326.40px;top:565.33px;font-size:10px;font-weight:400;color:#6e6ed8;line-height:10px;white-space:nowrap;-webkit-text-stroke:0.3px #6e6ed8;letter-spacing:-0.060px;">Gender</div>
<div style="position:absolute;left:1326.40px;top:582.52px;font-size:11.2px;font-weight:400;color:#505058;line-height:11.2px;white-space:nowrap;letter-spacing:-0.319px;">Female</div>
<div style="position:absolute;left:1326.40px;top:619.93px;font-size:10px;font-weight:400;color:#6e6ed8;line-height:10px;white-space:nowrap;-webkit-text-stroke:0.3px #6e6ed8;letter-spacing:-0.061px;">Date of Birth</div>
<div style="position:absolute;left:1326.40px;top:636.22px;font-size:11.2px;font-weight:400;color:#505058;line-height:11.2px;white-space:nowrap;letter-spacing:0.280px;">16/02/2012</div>
<div style="position:absolute;left:1326.40px;top:673.93px;font-size:10px;font-weight:400;color:#6e6ed8;line-height:10px;white-space:nowrap;-webkit-text-stroke:0.3px #6e6ed8;letter-spacing:-0.160px;">Emergency Contact</div>
<div style="position:absolute;left:1326.40px;top:691.52px;font-size:11.2px;font-weight:400;color:#505058;line-height:11.2px;white-space:nowrap;letter-spacing:0.131px;">+61 412345678</div>
<div style="position:absolute;left:1641.00px;top:217.79px;font-size:11px;font-weight:400;color:#4a4b52;line-height:11px;white-space:nowrap;-webkit-text-stroke:0.18px #4a4b52;letter-spacing:-0.317px;">BACK</div>
<div style="position:absolute;left:1642.80px;top:279.13px;font-size:12.6px;font-weight:400;color:#6a6ad6;line-height:12.6px;white-space:nowrap;-webkit-text-stroke:0.32px #6a6ad6;letter-spacing:-0.022px;">Experience</div>
<div style="position:absolute;left:1642.80px;top:315.22px;font-size:10.6px;font-weight:400;color:#56575d;line-height:10.6px;white-space:nowrap;-webkit-text-stroke:0.3px #56575d;letter-spacing:0.368px;">Head of ABA Dept.</div>
<div style="position:absolute;left:1642.80px;top:333.92px;font-size:11.2px;font-weight:400;color:#6c6d73;line-height:11.2px;white-space:nowrap;letter-spacing:-0.002px;">Institute of Autism Therapy</div>
<div style="position:absolute;left:1642.80px;top:352.49px;font-size:11px;font-weight:400;color:#626369;line-height:11px;white-space:nowrap;letter-spacing:-0.120px;">Jan 2018 - Present</div>
<div style="position:absolute;left:1642.80px;top:382.97px;font-size:10.6px;font-weight:400;color:#56575d;line-height:10.6px;white-space:nowrap;-webkit-text-stroke:0.3px #56575d;letter-spacing:0.182px;">Behavioural Therapy-Professional</div>
<div style="position:absolute;left:1642.80px;top:401.67px;font-size:11.2px;font-weight:400;color:#6c6d73;line-height:11.2px;white-space:nowrap;letter-spacing:-0.002px;">Institute of Autism Therapy</div>
<div style="position:absolute;left:1642.80px;top:420.24px;font-size:11px;font-weight:400;color:#626369;line-height:11px;white-space:nowrap;letter-spacing:0.025px;">Oct 2015 - Dec 2018</div>
<div style="position:absolute;left:1642.80px;top:450.72px;font-size:10.6px;font-weight:400;color:#56575d;line-height:10.6px;white-space:nowrap;-webkit-text-stroke:0.3px #56575d;letter-spacing:0.235px;">Behavioural Therapist -Junior</div>
<div style="position:absolute;left:1642.80px;top:469.42px;font-size:11.2px;font-weight:400;color:#6c6d73;line-height:11.2px;white-space:nowrap;letter-spacing:-0.002px;">Institute of Autism Therapy</div>
<div style="position:absolute;left:1642.80px;top:487.99px;font-size:11px;font-weight:400;color:#626369;line-height:11px;white-space:nowrap;letter-spacing:0.025px;">Apr 2012 - Sep 2015</div>
<div style="position:absolute;left:1642.80px;top:518.47px;font-size:10.6px;font-weight:400;color:#56575d;line-height:10.6px;white-space:nowrap;-webkit-text-stroke:0.3px #56575d;letter-spacing:0.163px;">Assistant Therapist</div>
<div style="position:absolute;left:1642.80px;top:537.17px;font-size:11.2px;font-weight:400;color:#6c6d73;line-height:11.2px;white-space:nowrap;letter-spacing:-0.002px;">Institute of Autism Therapy</div>
<div style="position:absolute;left:1642.80px;top:555.74px;font-size:11px;font-weight:400;color:#626369;line-height:11px;white-space:nowrap;letter-spacing:0.036px;">Jan 2010 - Mar 2012</div>
<div style="position:absolute;left:1642.80px;top:627.53px;font-size:12.6px;font-weight:400;color:#6a6ad6;line-height:12.6px;white-space:nowrap;-webkit-text-stroke:0.32px #6a6ad6;letter-spacing:0.072px;">Certifications</div>
<div style="position:absolute;left:1642.80px;top:663.72px;font-size:10.6px;font-weight:400;color:#56575d;line-height:10.6px;white-space:nowrap;-webkit-text-stroke:0.3px #56575d;letter-spacing:0.241px;">Certified Autism Specialist (CAS)</div>
<div style="position:absolute;left:1642.80px;top:682.82px;font-size:11.2px;font-weight:400;color:#6c6d73;line-height:11.2px;white-space:nowrap;letter-spacing:-0.002px;">Institute of Autism Therapy</div>
<div style="position:absolute;left:1642.80px;top:701.29px;font-size:11px;font-weight:400;color:#626369;line-height:11px;white-space:nowrap;letter-spacing:0.179px;">2010</div><div style="position:absolute;left:0;top:720px;width:1920px;height:1px;background:rgba(255,255,255,0.55)"></div>
<div style="position:absolute;left:0;top:721px;width:1920px;height:1px;background:#000"></div></body></html>
